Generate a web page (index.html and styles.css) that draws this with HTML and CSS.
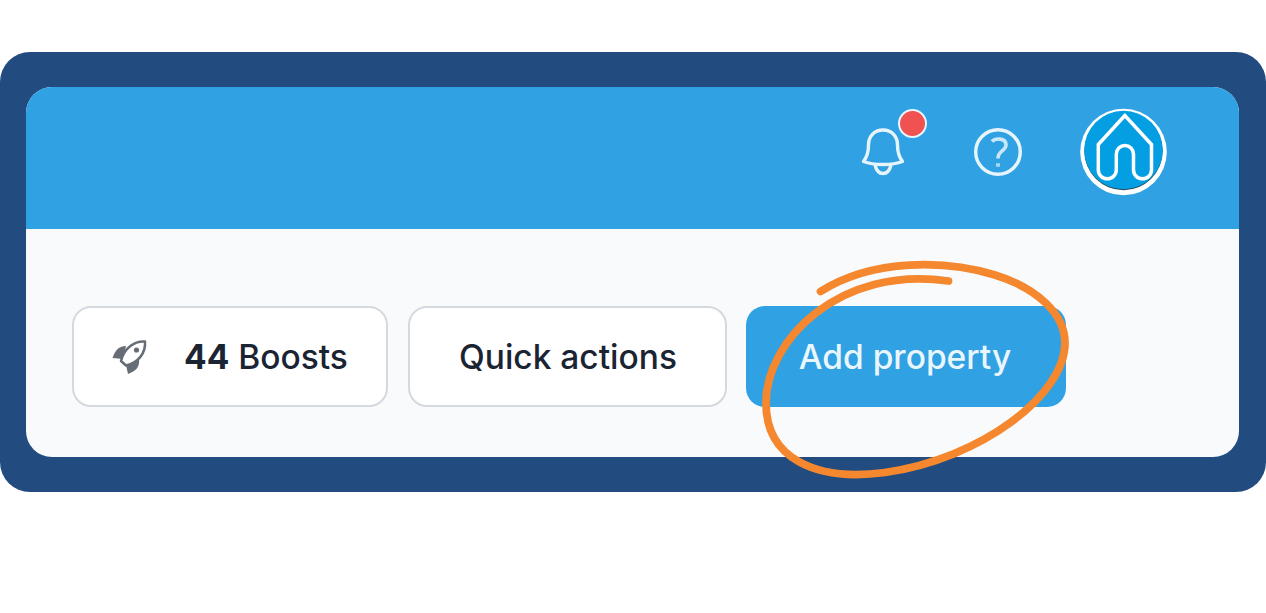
FILE: index.html
```
<!DOCTYPE html>
<html lang="en">
<head>
    <meta charset="UTF-8">
    <meta name="viewport" content="width=device-width, initial-scale=1.0">
    <title>Add property</title>
    <link rel="stylesheet" href="styles.css">
</head>
<body>

    <div class="frame">
        <div class="panel">
            <header class="topbar">
                <div class="bell">
                    <svg width="44" height="50" viewBox="0 0 44 50" fill="none" stroke="#e6f5fd" stroke-width="3.400" stroke-linejoin="round">
                        <path d="M22 3C13 3 7.500 9.500 7.500 18C7.500 26 6 30 2.500 34.500Q10 37.500 22 37.500T41.500 34.500C38 30 36.500 26 36.500 18C36.500 9.500 31 3 22 3Z"/>
                        <path d="M14 38C15.500 44 18 46.500 22 46.500S28.500 44 30 38"/>
                    </svg>
                    <span class="badge"></span>
                </div>
                <svg class="help" width="50" height="50" viewBox="0 0 50 50" fill="none" stroke="#e6f5fd" stroke-width="3.400">
                    <circle cx="25" cy="25" r="22.300"/>
                    <path d="M19 14.500C22 11 33 10.500 33 18C33 24 25 23.500 25 31.500" stroke="#c9e7f8" stroke-width="3.600"/>
                    <path d="M23 38H27" stroke="#a9d8f4"/>
                </svg>
                <svg class="avatar" width="88" height="88" viewBox="0 0 88 88" fill="none">
                    <circle cx="44.500" cy="44" r="43.300" fill="#fff"/>
                    <circle cx="44.500" cy="43" r="39.200" fill="#234a5c"/>
                    <circle cx="44.500" cy="42" r="39.300" fill="#049fe3"/>
                    <path d="M45.900 7.500L19.300 36.500V61.800A9 9 0 0 0 37.300 61.800V46A8.600 8.600 0 0 1 54.500 46V61.800A9 9 0 0 0 72.500 61.800V36.500Z" stroke="#fff" stroke-width="3.500"/>
                </svg>
            </header>

            <div class="actions">
                <button class="btn btn-boosts" type="button">
                    <svg width="36" height="36" viewBox="0 0 36 36">
                        <path d="M14 7C6 7 3 12 0.500 19L11 20ZM27 20C28 28 24 32 16 35L14 26Z" fill="#666d77"/>
                        <path d="M33 2.500C23 1.500 12 9 9 22L14 26.500C26 24 34 14 33 2.500Z" fill="#fff" stroke="#666d77" stroke-width="2.500" stroke-linejoin="round"/>
                        <circle cx="24.500" cy="11" r="2.600" fill="#666d77"/>
                    </svg>
                    <span class="boosts-text"><b>44</b> Boosts</span>
                </button>
                <button class="btn btn-quick" type="button">Quick actions</button>
                <button class="btn btn-add" type="button">Add property</button>
            </div>
        </div>

        <!-- hand-drawn highlight around the add button -->
        <svg class="highlight" width="320" height="240" viewBox="750 250 320 240" fill="none">
            <path d="M820.500 291.500C873 258 947 260 995 275C1037 288 1065 314 1065 343C1065 395 981 459 885 472.500C815 482 766 458 766 403C766 340 840 265 948.500 281" stroke="#f5882e" stroke-width="7.800" stroke-linecap="round"/>
        </svg>
    </div>

</body>
</html>
```

FILE: styles.css
```
body {
    margin: 0;
    padding-top: 52px;
    background-color: #fff;
    font-family: Inter, sans-serif;
}
.frame {
    position: relative;
    height: 440px;
    padding: 35px 27.5px 35px 26px;
    box-sizing: border-box;
    border-radius: 30px;
    background-color: #224b80;
}
.panel {
    height: 100%;
    overflow: hidden;
    border-radius: 26px;
    background-color: #f9fafc;
}
.topbar {
    display: flex;
    align-items: flex-start;
    justify-content: flex-end;
    height: 142px;
    padding-right: 72px;
    box-sizing: border-box;
    background-color: #30a1e2;
}
.topbar svg {
    display: block;
}
.bell {
    position: relative;
    margin: 40px 68px 0 0;
}
.badge {
    position: absolute;
    top: -18px;
    right: -22px;
    width: 25px;
    height: 25px;
    border: 2px solid #e6f5fd;
    border-radius: 50%;
    background-color: #f05252;
}
.help {
    margin: 40px 56px 0 0;
}
.avatar {
    margin-top: 21px;
}
.actions {
    display: flex;
    padding: 77px 0 0 46px;
}
.btn {
    display: flex;
    align-items: center;
    justify-content: center;
    height: 101px;
    padding: 0;
    box-sizing: border-box;
    border: 2px solid #d5d8df;
    border-radius: 19px;
    background-color: #fff;
    color: #1b2433;
    font-family: inherit;
    font-size: 33.5px;
    font-weight: 500;
    white-space: nowrap;
}
.btn-boosts {
    justify-content: flex-start;
    width: 316px;
    margin-right: 20px;
    padding-left: 38px;
}
.boosts-text {
    margin-left: 36px;
}
.btn-quick {
    width: 319px;
    margin-right: 19px;
    padding-left: 1px;
}
.btn-add {
    width: 320px;
    padding-right: 2px;
    border: none;
    background-color: #30a1e2;
    color: #eaf6fd;
}
.highlight {
    position: absolute;
    top: 198px;
    left: 750px;
}
```
